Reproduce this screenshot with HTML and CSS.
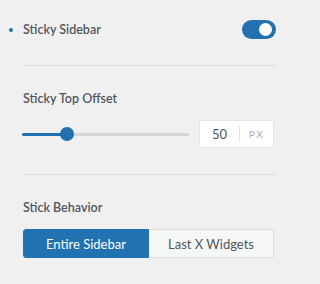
FILE: index.html
```html
<!DOCTYPE html>
<html>
<head>
<meta charset="utf-8">
<link rel="stylesheet" href="styles.css">
</head>
<body>
<div class="panel">
  <div class="section section-toggle">
    <div class="toggle-row">
      <span class="title marked">Sticky Sidebar</span>
      <span class="toggle"><span class="knob"></span></span>
    </div>
  </div>
  <div class="section">
    <div class="title">Sticky Top Offset</div>
    <div class="slider-row">
      <div class="slider" style="--p: 0.25">
        <div class="track"></div>
        <div class="fill"></div>
        <div class="thumb"></div>
      </div>
      <div class="num-box">
        <span class="num">50</span>
        <span class="sep"></span>
        <span class="unit">PX</span>
      </div>
    </div>
  </div>
  <div class="section last">
    <div class="title">Stick Behavior</div>
    <div class="seg">
      <button class="seg-btn active">Entire Sidebar</button>
      <button class="seg-btn">Last X Widgets</button>
    </div>
  </div>
</div>
</body>
</html>
```
FILE: styles.css
```css
* { box-sizing: border-box; }
html, body { margin: 0; padding: 0; }
body {
  background: #f0f0f1;
  font-family: "Lato", "Open Sans", sans-serif;
  color: #50575e;
  width: 298px;
  height: 284px;
  overflow: hidden;
}
.panel {
  padding: 0 23px 0 23px;
}
.section {
  padding: 24px 0 26px;
  border-bottom: 1px solid #dcdcde;
}
.section-toggle {
  padding-top: 20px;
}
.section.last {
  border-bottom: none;
}
.title {
  font-size: 12.5px;
  line-height: 18px;
  font-weight: 600;
  color: #50575e;
}
.toggle-row {
  display: flex;
  align-items: center;
  justify-content: space-between;
  height: 19px;
}
.marked {
  position: relative;
}
.marked::before {
  content: "";
  position: absolute;
  left: -14px;
  top: 7px;
  width: 4px;
  height: 4px;
  border-radius: 50%;
  background: #2271b1;
}
.toggle {
  position: relative;
  width: 34px;
  height: 19px;
  border-radius: 10px;
  background: #2271b1;
  margin-right: -1px;
}
.knob {
  position: absolute;
  right: 4px;
  top: 3px;
  width: 13px;
  height: 13px;
  border-radius: 50%;
  background: #fff;
}
.slider-row {
  display: flex;
  align-items: center;
  gap: 9px;
  margin-top: 12px;
}
.slider {
  position: relative;
  flex: 1;
  height: 28px;
  margin-left: -1px;
  margin-right: 1px;
}
.track {
  position: absolute;
  left: 0;
  right: 0;
  top: 13px;
  height: 3px;
  border-radius: 2px;
  background: #d5d5d7;
}
.fill {
  position: absolute;
  left: 0;
  top: 13px;
  width: calc(var(--p) * (100% - 14px) + 7px);
  height: 3px;
  border-radius: 2px;
  background: #2271b1;
}
.thumb {
  position: absolute;
  top: 7px;
  left: calc(var(--p) * (100% - 14px));
  width: 14px;
  height: 14px;
  border-radius: 50%;
  background: #2271b1;
}
.num-box {
  display: flex;
  align-items: center;
  width: 75px;
  height: 28px;
  background: #fff;
  border: 1px solid #e2e4e7;
  border-radius: 2px;
  flex-shrink: 0;
  margin-right: 1px;
}
.num {
  width: 39px;
  text-align: center;
  font-size: 13px;
  color: #50575e;
}
.sep {
  width: 1px;
  height: 16px;
  background: #e2e4e7;
}
.unit {
  flex: 1;
  text-align: center;
  font-size: 10px;
  letter-spacing: 1.5px;
  color: #a7aaad;
}
.seg {
  display: flex;
  margin-top: 12px;
  height: 29px;
  margin-right: 1px;
}
.seg-btn {
  flex: 1;
  margin: 0;
  padding: 0;
  font-family: inherit;
  font-size: 13px;
  border: 1px solid #dcdcde;
  background: #f6f7f7;
  color: #50575e;
  cursor: pointer;
}
.seg-btn:first-child {
  border-radius: 3px 0 0 3px;
}
.seg-btn:last-child {
  border-radius: 0 3px 3px 0;
  border-left: none;
}
.seg-btn.active {
  background: #2271b1;
  border-color: #2271b1;
  color: #fff;
}
```
